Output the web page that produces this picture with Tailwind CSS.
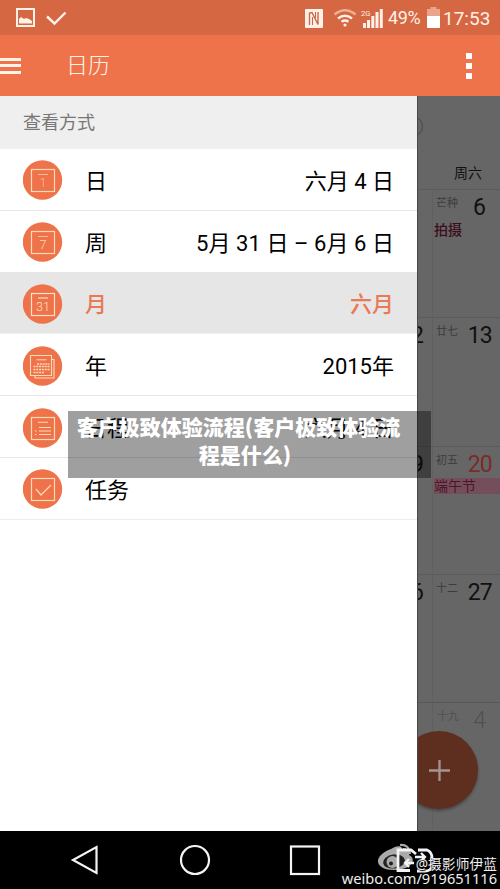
<!DOCTYPE html>
<html lang="zh-CN">
<head>
<meta charset="utf-8">
<title>日历</title>
<script src="https://cdn.jsdelivr.net/npm/@tailwindcss/browser@4"></script>
</head>
<body class="[font-family:Roboto,'Noto_Sans_CJK_SC',sans-serif] bg-black">
<div class="relative flex h-[889px] w-[500px] flex-col overflow-hidden">
  <header class="flex h-[35px] shrink-0 items-center bg-[#d56742] pr-[9px] pl-4 text-[#fff1e8]">
    <svg class="h-[20px] w-[52px]" viewBox="0 0 52 20" fill="none" stroke="currentColor">
      <rect x="1" y="1" width="17" height="17" stroke-width="2"/>
      <path d="M3 15.500V11l2-2 3 2 2-1 3 1 3 2v2.500z" fill="currentColor" stroke="none"/>
      <path d="M31 8.500l7.500 7L49.500 4.500" stroke-width="2.400"/>
    </svg>
    <svg class="ml-auto h-[22px] w-[79px]" viewBox="0 0 79 22" fill="none" stroke="currentColor">
      <rect x="1" y="2" width="18" height="19" rx="1" fill="currentColor" stroke="none"/>
      <path d="M5.500 18V6l2.500-.5 6 12V5" stroke="#c9694a" stroke-width="1.400"/><path d="M8.500 10v8M11.500 5v6" stroke="#c9694a" stroke-width="1.100"/>
      <path d="M30.500 7.500q10.500-8.500 21 0" stroke="#f0b096" stroke-width="2.400"/>
      <path d="M34 11.500q7-5.500 14 0M37.500 14.800q3.500-2.500 7 0" stroke-width="2.400"/>
      <circle cx="41" cy="18" r="1.600" fill="currentColor" stroke="none"/>
      <path d="M60.500 21v-5M64.500 21v-8M68.800 21v-12M73 21v-16M77.300 21V2" stroke-width="3"/>
      <text x="57" y="8.500" font-size="7.500" fill="currentColor" stroke="none">2G</text>
    </svg>
    <span class="ml-[5px] w-[34px] pt-px text-[18px] leading-none whitespace-nowrap tracking-[-0.4px]">49%</span>
    <svg class="ml-[5px] h-[21px] w-[13px]" viewBox="0 0 13 21"><path d="M0 2h3.500V0h6v2H13v18a1 1 0 0 1-1 1H1a1 1 0 0 1-1-1z" fill="#eaa48b"/><path d="M0 9h13v11a1 1 0 0 1-1 1H1a1 1 0 0 1-1-1z" fill="#fff"/></svg>
    <span class="ml-[3px] w-[48px] pt-[2px] text-[19px] leading-none whitespace-nowrap">17:53</span>
  </header>

  <nav class="flex h-[61px] shrink-0 items-center bg-[#ee734a] pr-[28px] text-[#fff3ea]">
    <div class="flex w-[21px] flex-col gap-[3.500px]">
      <i class="h-[3px] bg-current"></i><i class="h-[3px] bg-current"></i><i class="h-[3px] bg-current"></i>
    </div>
    <h1 class="ml-[45px] pt-px text-[22px] leading-none font-light">日历</h1>
    <div class="ml-auto flex w-[6px] flex-col gap-1">
      <i class="h-[6px] bg-white"></i><i class="h-[6px] bg-white"></i><i class="h-[6px] bg-white"></i>
    </div>
  </nav>

  <main class="flex h-[735px] shrink-0 bg-white">
    <aside class="w-[417px] shrink-0 bg-white text-[22px] leading-none text-black">
      <h2 class="flex h-[53px] items-center bg-[#efefef] pl-[23px] pt-px text-[18px] leading-none text-[#777]">查看方式</h2>
      <ul>
        <li class="flex h-[61.800px] items-center border-b border-[#e6e6e6] px-[23px] pt-[2px]">
          <svg class="mr-[22px] size-[40px]" viewBox="0 0 40 40" fill="none" stroke="#ffd9b8"><circle cx="19.500" cy="20" r="19.700" fill="#ee734a" stroke="none"/><rect x="8.500" y="9.500" width="23" height="22" stroke-width="1.200"/><path d="M15 14.500h10" stroke-width=".7"/><text x="20" y="26.500" text-anchor="middle" font-size="12.500" font-weight="300" fill="#ffd9b8" fill-opacity=".75" stroke="none">1</text></svg>
          <span class="pt-[3px]">日</span><span class="ml-auto pt-[3px]">六月 4 日</span>
        </li>
        <li class="flex h-[61.800px] items-center border-b border-[#e6e6e6] px-[23px] pt-[2px]">
          <svg class="mr-[22px] size-[40px]" viewBox="0 0 40 40" fill="none" stroke="#ffd9b8"><circle cx="19.500" cy="20" r="19.700" fill="#ee734a" stroke="none"/><rect x="8.500" y="9.500" width="23" height="22" stroke-width="1.200"/><path d="M15 14.500h10" stroke-width=".7"/><text x="20" y="27" text-anchor="middle" font-size="12.500" font-weight="300" fill="#ffd9b8" stroke="none">7</text></svg>
          <span class="pt-[3px]">周</span><span class="ml-auto pt-[3px] tracking-[0.060px]">5月 31 日 – 6月 6 日</span>
        </li>
        <li class="flex h-[61.800px] items-center border-b border-[#f0f0f0] bg-[#e6e6e6] px-[23px] pt-[2px] font-medium text-[#e97a56]">
          <svg class="mr-[22px] size-[40px]" viewBox="0 0 40 40" fill="none" stroke="#ffe3c8"><circle cx="19.500" cy="20" r="19.700" fill="#ee734a" stroke="none"/><rect x="8.500" y="9.500" width="23" height="22" stroke-width="1.200"/><path d="M15 14h10" stroke-width="1.200"/><text x="20" y="27" text-anchor="middle" font-size="12.500" font-weight="300" fill="#ffe3c8" stroke="none">31</text></svg>
          <span class="pt-[3px]">月</span><span class="ml-auto pt-[3px]">六月</span>
        </li>
        <li class="flex h-[61.800px] items-center border-b border-[#e6e6e6] px-[23px] pt-[2px]">
          <svg class="mr-[22px] size-[40px]" viewBox="0 0 40 40" fill="none" stroke="#ffd9b8"><circle cx="19.500" cy="20" r="19.700" fill="#ee734a" stroke="none"/><path d="M7.500 9.500h21v20h-21zM28.500 13.500h2.500v18.500H12v-2.500" stroke-width="1.100"/><path d="M13.500 13.800h10"/><path d="M14 18h12.500M10.500 20.500h16M10.500 23.500h16M10.500 26.500h11" stroke-width="1.500" stroke-dasharray="2 .8"/></svg>
          <span class="pt-[3px]">年</span><span class="ml-auto pt-[3px]">2015年</span>
        </li>
        <li class="flex h-[61.800px] items-center border-b border-[#e6e6e6] px-[23px] pt-[2px]">
          <svg class="mr-[22px] size-[40px]" viewBox="0 0 40 40" fill="none" stroke="#ffd9b8"><circle cx="19.500" cy="20" r="19.700" fill="#ee734a" stroke="none"/><rect x="8.500" y="9.500" width="23" height="22" stroke-width="1.200"/><path d="M15 14.300h10M16 19.500h12M12 23h1.500M16 23h12M12 26.500h1.500M16 26.500h12"/></svg>
          <span class="pt-[3px]">日程</span><span class="ml-auto pt-[3px]">六月 4 日</span>
        </li>
        <li class="flex h-[61.800px] items-center border-b border-[#ececec] px-[23px] pt-[2px]">
          <svg class="mr-[22px] size-[40px]" viewBox="0 0 40 40" fill="none" stroke="#ffd9b8"><circle cx="19.500" cy="20" r="19.700" fill="#ee734a" stroke="none"/><rect x="8.500" y="9.500" width="23" height="22" stroke-width="1.200"/><path d="M13 20l5 6 10-10" stroke-width="1.200"/></svg>
          <span class="pt-[3px]">任务</span>
        </li>
      </ul>
    </aside>

    <section class="relative flex w-[83px] flex-col overflow-hidden border-l border-[#484848] bg-[#666] text-[#111]">
      <div class="relative flex h-[94px] shrink-0 items-end justify-end border-b border-[#5b5b5b] pr-[18px] pb-[9px] text-[14px] leading-none">
        <i class="absolute top-[20px] -left-[16px] size-[21px] rounded-full border border-[#454545]"></i>周六
      </div>
      <div class="flex h-[128.250px] shrink-0 border-b border-[#5b5b5b]">
        <div class="w-[15px] border-r border-[#606060]"></div>
        <div class="flex-1 pt-[7px]">
          <div class="flex items-start justify-between pr-[14px] pl-[3px]"><span class="pt-px text-[11px] leading-[12px] text-[#3c3c3c]">芒种</span><span class="text-[23px] leading-[22px]">6</span></div>
          <p class="pl-px text-[14px] leading-[22px] font-medium text-[#3c0d1e]">拍摄</p>
        </div>
      </div>
      <div class="flex h-[128.250px] shrink-0 border-b border-[#5b5b5b]">
        <div class="flex w-[15px] justify-end border-r border-[#606060] pt-[7px] pr-[8px] text-[23px] leading-[22px]">12</div>
        <div class="flex flex-1 items-start justify-between pt-[7px] pr-2 pl-[3px]"><span class="pt-px text-[11px] leading-[12px] text-[#3c3c3c]">廿七</span><span class="text-[23px] leading-[22px] tracking-[-0.8px]">13</span></div>
      </div>
      <div class="flex h-[128.250px] shrink-0 border-b border-[#5b5b5b]">
        <div class="flex w-[15px] justify-end border-r border-[#606060] pt-[7px] pr-[8px] text-[23px] leading-[22px]">19</div>
        <div class="flex-1 pt-[7px]">
          <div class="flex items-start justify-between pr-2 pl-[3px]"><span class="pt-px text-[11px] leading-[12px] text-[#3c3c3c]">初五</span><span class="text-[23px] leading-[22px] tracking-[-0.8px] text-[#7c2b28]">20</span></div>
          <p class="mt-[2px] ml-px h-[16px] bg-[#754e5b] text-[14px] leading-[16px] text-[#4e1429]">端午节</p>
        </div>
      </div>
      <div class="flex h-[128.250px] shrink-0 border-b border-[#575757]">
        <div class="flex w-[15px] justify-end border-r border-[#606060] pt-[7px] pr-[8px] text-[23px] leading-[22px]">26</div>
        <div class="flex flex-1 items-start justify-between pt-[7px] pr-2 pl-[3px]"><span class="pt-px text-[11px] leading-[12px] text-[#3c3c3c]">十二</span><span class="text-[23px] leading-[22px] tracking-[-0.8px]">27</span></div>
      </div>
      <div class="flex flex-1">
        <div class="w-[15px] border-r border-[#606060]"></div>
        <div class="flex flex-1 items-start justify-between pt-[7px] pr-[14px] pl-[4px] text-[#505050]"><span class="pt-px text-[11px] leading-[12px]">十九</span><span class="text-[23px] leading-[22px] font-light">4</span></div>
      </div>
      <div class="absolute bottom-[22px] -left-[18px] flex size-[78px] items-center justify-center rounded-full bg-[#5e2e1e] shadow-[0_2px_3px_rgba(0,0,0,0.3)]">
        <svg class="size-[21px]" viewBox="0 0 22 22" stroke="#a4958f" stroke-width="2.400"><path d="M0 11h22M11 0v22"/></svg>
      </div>
    </section>
  </main>

  <footer class="relative h-[58px] shrink-0 bg-black">
    <svg class="block h-[58px] w-[500px]" viewBox="0 0 500 58" fill="none" stroke="#f4f4f4" stroke-width="2.200">
      <path d="M96.500 16v26L73 29z"/>
      <circle cx="195" cy="29" r="14"/>
      <rect x="291" y="15.500" width="28" height="27.500"/>
      <g stroke="none">
        <path d="M391 18c4-3 10-4 11-1 0 2-1 3 0 3 6-2 9 0 7 4 7 3 4 12-7 14-13 3-23-1-24-7-1-5 6-11 13-13z" fill="#aaa"/>
        <ellipse cx="394" cy="30.500" rx="11" ry="7" fill="#222" transform="rotate(-8 394 30.500)"/>
        <circle cx="392.500" cy="31" r="6" fill="#aaa"/><circle cx="391" cy="32.500" r="2" fill="#222"/>
      </g>
      <path d="M400 14q9-1 10 9M403 18q4 0 4 4" stroke="#aaa"/>
      <path d="M410 39.500H398V19h13l5 4M418 19h9q5 2 5 8v8q-1 5-7 5h-8" stroke-width="2.800"/>
      <path d="M415 26h10M421 22l4 4-4 4M414 32h-9M409 28l-4 4 4 4" stroke-width="2.300"/>
    </svg>
    <div class="absolute right-[3px] bottom-[4px] flex flex-col items-end [font-family:'Noto_Sans','Noto_Sans_CJK_SC',sans-serif] leading-[14px] whitespace-nowrap text-[#eee] [text-shadow:1px_1px_1px_#000]">
      <span class="text-[13.700px] tracking-[0.100px]">@摄影师伊蓝</span>
      <span class="text-[14.600px]">weibo.com/919651116</span>
    </div>
  </footer>

  <div class="absolute top-[411px] left-[68px] h-[67px] w-[363px] bg-black/[0.375] pt-px pr-[9px] text-center [font-family:'Noto_Sans_CJK_SC',sans-serif] text-[21px] leading-[28px] font-black whitespace-nowrap text-white">
    <p class="pr-[13px]">客户极致体验流程(客户极致体验流</p>
    <p>程是什么)</p>
  </div>
</div>
</body>
</html>
